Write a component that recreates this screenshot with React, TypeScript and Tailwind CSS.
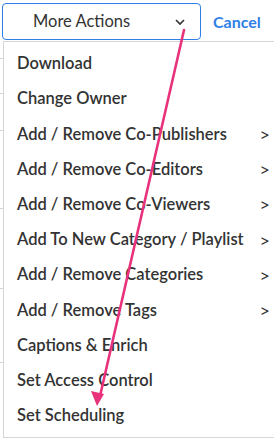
import React from 'react'

const items: { label: string; sub?: boolean }[] = [
  { label: 'Download' },
  { label: 'Change Owner' },
  { label: 'Add / Remove Co-Publishers', sub: true },
  { label: 'Add / Remove Co-Editors', sub: true },
  { label: 'Add / Remove Co-Viewers', sub: true },
  { label: 'Add To New Category / Playlist', sub: true },
  { label: 'Add / Remove Categories', sub: true },
  { label: 'Add / Remove Tags', sub: true },
  { label: 'Captions & Enrich' },
  { label: 'Set Access Control' },
  { label: 'Set Scheduling' },
]

// row separators of the table behind the menu, peeking out on the left
const bgLines = [58, 93, 130, 208, 288, 362]

export default function App() {
  return (
    <div
      className="relative w-[274px] h-[440px] overflow-hidden bg-white text-[#333]"
      style={{ fontFamily: 'Lato, "Open Sans", sans-serif' }}
    >
      {bgLines.map((y) => (
        <div key={y} className="absolute left-0 w-[3px] h-px bg-[#d6d6d6]" style={{ top: y }} />
      ))}

      <div className="flex items-center pl-[2px] pt-[3px]">
        <button className="relative flex h-[37px] w-[199px] items-center rounded-[4px] border border-[#2f7fe6] bg-white">
          <span className="flex-1 pl-[30px] text-left text-[16.5px] text-[#333]">More Actions</span>
          <svg className="mr-[15px] h-[8px] w-[10px]" viewBox="0 0 10 8" fill="none">
            <path d="M1 2l4 4 4-4" stroke="#333" strokeWidth="1.6" />
          </svg>
        </button>
        <span className="ml-[12px] text-[16px] font-bold text-[#2f7fe6]">Cancel</span>
      </div>

      <div className="ml-[3px] mt-[1px] h-[397px] border-l border-t border-b border-[#d6d6d6] bg-white pt-[4px]">
        {items.map((it) => (
          <div key={it.label} className="flex h-[35.2px] items-center pl-[13px] pr-[4px] text-[16.5px] font-semibold">
            <span className="flex-1">{it.label}</span>
            {it.sub && <span className="text-[18px] font-normal leading-none">&gt;</span>}
          </div>
        ))}
      </div>

      <svg className="pointer-events-none absolute left-0 top-0" width="274" height="440">
        <line x1="184" y1="30" x2="100" y2="396" stroke="#e8327c" strokeWidth="2.6" strokeLinecap="round" />
        <polygon points="97,406 91,391 104,394" fill="#e8327c" />
      </svg>
    </div>
  )
}
